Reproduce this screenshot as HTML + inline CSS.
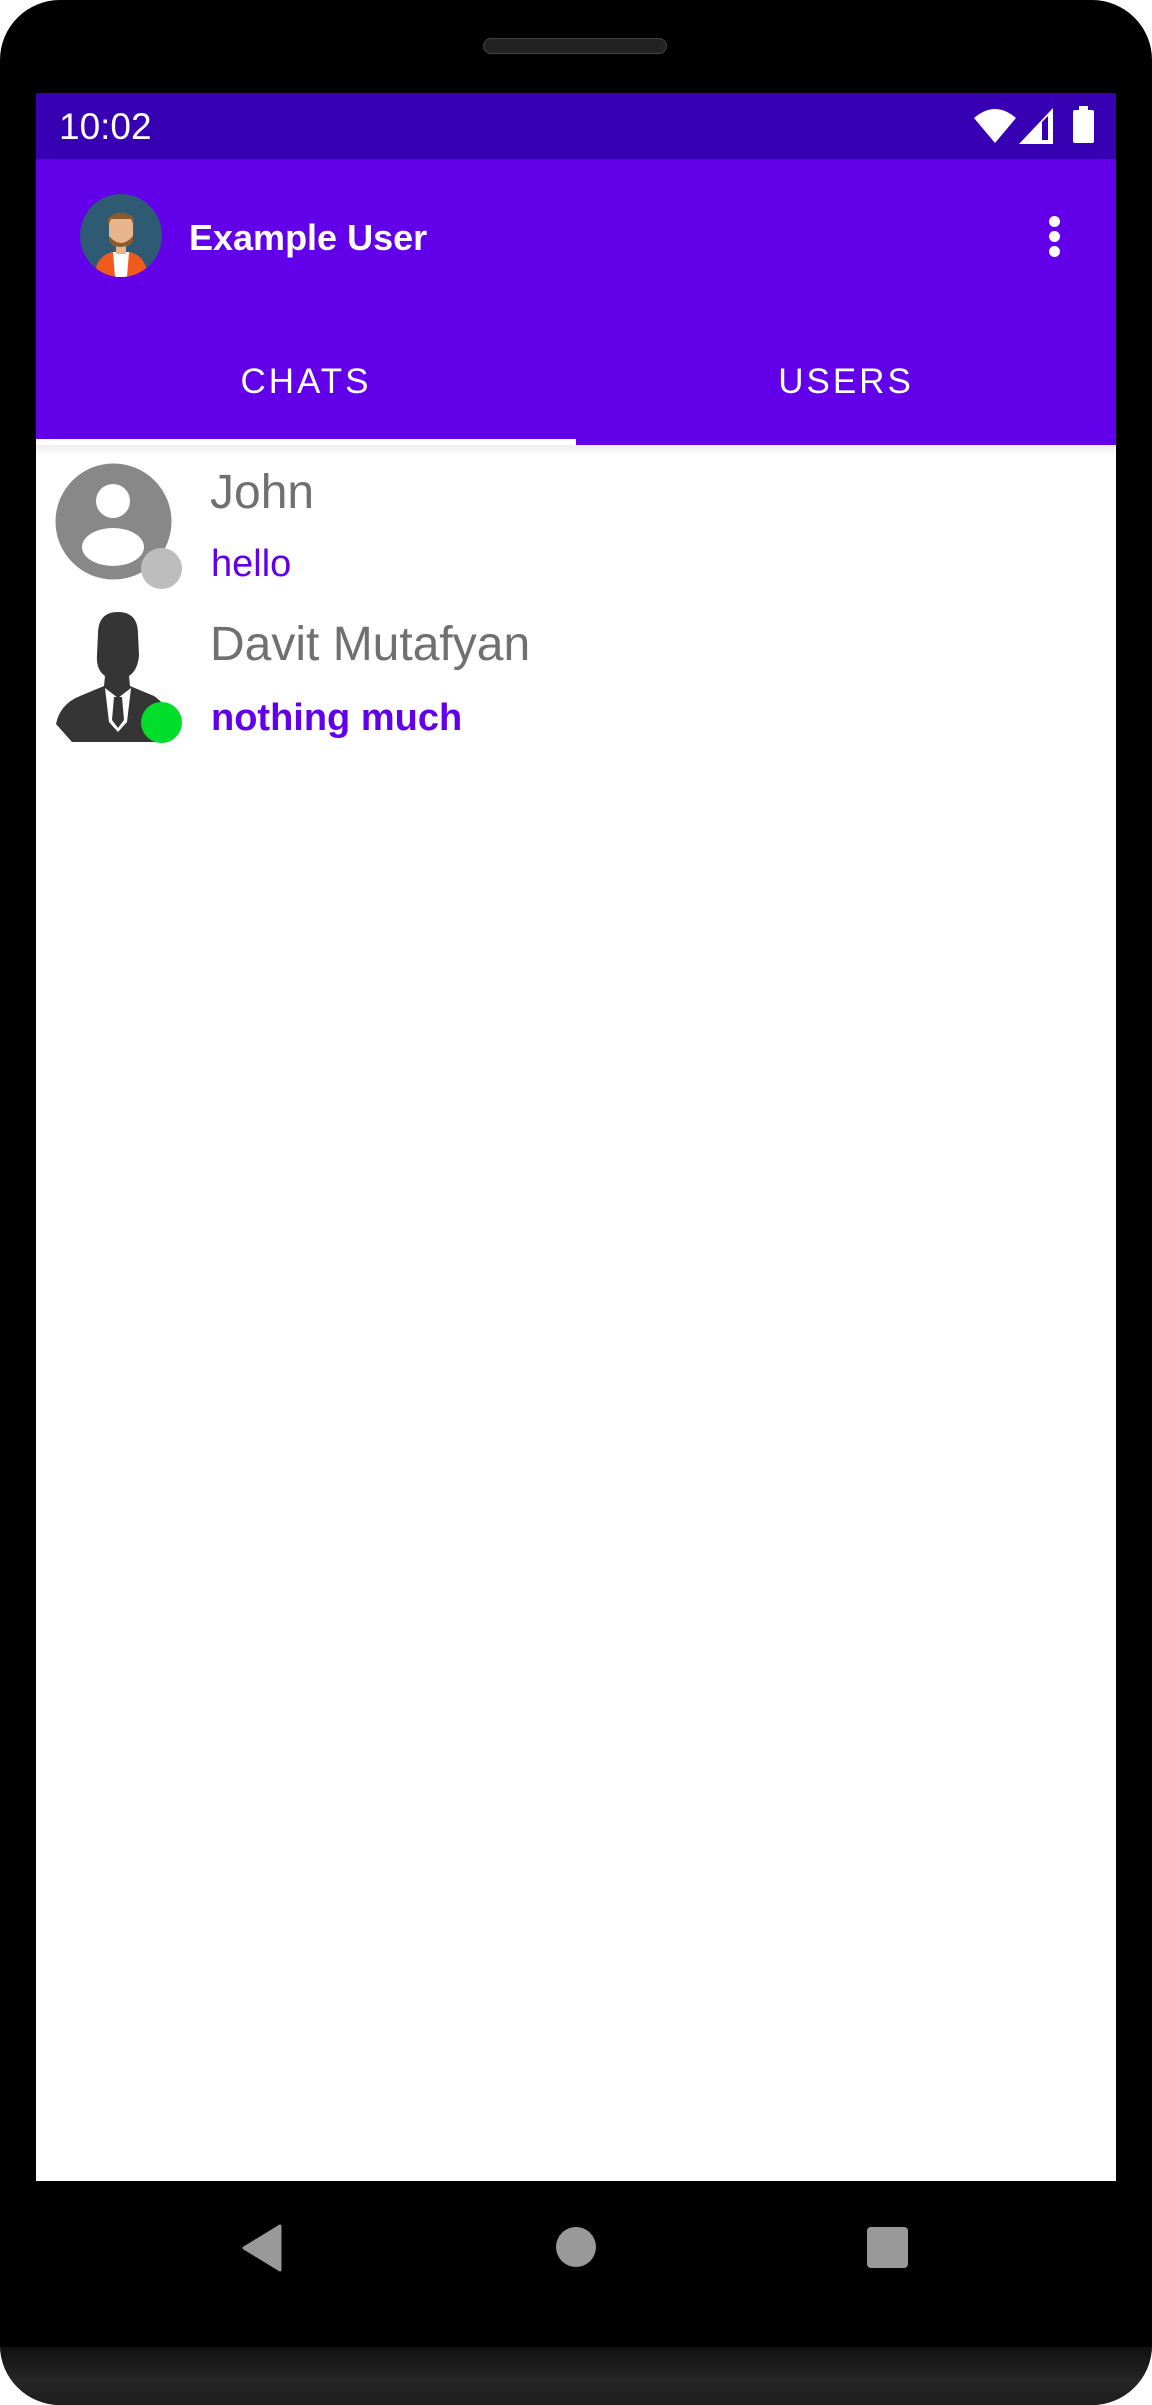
<!DOCTYPE html>
<html><head><meta charset="utf-8"><style>
html,body{margin:0;padding:0;background:#fff;}
body{width:1152px;height:2405px;position:relative;overflow:hidden;font-family:"Liberation Sans",sans-serif;}
.phone{position:absolute;left:0;top:0;width:1152px;height:2405px;background:#000;border-radius:60px;overflow:hidden;}
.bezel{position:absolute;left:0;top:2347px;width:1152px;height:58px;background:linear-gradient(#111,#262626 60%,#1d1d1d);}
.speaker{position:absolute;left:483px;top:38px;width:184px;height:16px;border-radius:8px;background:#222;border:1px solid #444;box-sizing:border-box;}
.screen{position:absolute;left:36px;top:93px;width:1080px;height:2088px;background:#fff;overflow:hidden;}
.status{position:absolute;left:0;top:0;width:1080px;height:66px;background:#3700b3;}
.bar{position:absolute;left:0;top:66px;width:1080px;height:286px;background:#6200ea;}
.t{position:absolute;color:#fff;white-space:nowrap;}
</style></head><body>
<div class="phone">
<div class="speaker"></div>
<div class="screen">
 <div class="status">
  <div class="t" style="left:23px;top:13px;font-size:37px;">10:02</div>
  <svg style="position:absolute;left:938px;top:15px" width="42" height="35" viewBox="0 0 42 35"><path d="M0 10 Q21 -8 42 10 L21 35 Z" fill="#fff"/></svg>
  <svg style="position:absolute;left:983px;top:15px" width="34" height="36" viewBox="0 0 34 36"><path d="M0 36 L34 0 L34 36 Z" fill="#fff"/><path d="M23 14 L23 32 L29 32 L29 8 Z" fill="#3700b3"/></svg>
  <div style="position:absolute;left:1037px;top:17px;width:21px;height:33px;background:#fff;border-radius:2px;"></div>
  <div style="position:absolute;left:1043px;top:13px;width:9px;height:5px;background:#fff;"></div>
 </div>
 <div class="bar">
  <svg style="position:absolute;left:44px;top:35px" width="82" height="83" viewBox="0 0 82 83">
   <defs><clipPath id="c"><ellipse cx="41" cy="41.5" rx="41" ry="41.5"/></clipPath></defs>
   <ellipse cx="41" cy="41.5" rx="41" ry="41.5" fill="#2f5a73"/>
   <g clip-path="url(#c)">
    <path d="M14 83 Q16 62 32 58 L50 58 Q66 62 68 83Z" fill="#f05a1a"/>
    <path d="M33 58 L49 58 L47 83 L35 83Z" fill="#fff"/>
    <rect x="36" y="48" width="10" height="12" fill="#e8b48c"/>
    <rect x="29" y="22" width="24" height="30" rx="8" fill="#e8b48c"/>
    <path d="M29 42 Q41 56 53 42 L53 48 Q41 58 29 48Z" fill="#8a5a2a"/>
    <path d="M28 32 L28 24 Q41 13 54 24 L54 32 L51 25 L31 25Z" fill="#8a5a2a"/>
   </g>
  </svg>
  <div class="t" style="left:153px;top:58px;font-size:36px;font-weight:bold;">Example User</div>
  <div style="position:absolute;left:1013px;top:57px;width:11px;height:11px;border-radius:50%;background:#fff;"></div>
  <div style="position:absolute;left:1013px;top:72px;width:11px;height:11px;border-radius:50%;background:#fff;"></div>
  <div style="position:absolute;left:1013px;top:87px;width:11px;height:11px;border-radius:50%;background:#fff;"></div>
  <div class="t" style="left:0;width:540px;text-align:center;top:203px;font-size:35px;letter-spacing:3px;">CHATS</div>
  <div class="t" style="left:540px;width:540px;text-align:center;top:203px;font-size:35px;letter-spacing:3px;">USERS</div>
  <div style="position:absolute;left:0;top:280px;width:540px;height:6px;background:#fff;"></div>
 </div>
 <div style="position:absolute;left:0;top:352px;width:1080px;height:12px;background:linear-gradient(rgba(0,0,0,0.07),rgba(0,0,0,0));"></div>
 <!-- John -->
 <svg style="position:absolute;left:19px;top:370px" width="117" height="117" viewBox="0 0 117 117">
  <ellipse cx="58.5" cy="58.5" rx="58" ry="58" fill="#888"/>
  <circle cx="58" cy="38" r="17" fill="#fff"/>
  <ellipse cx="58" cy="84" rx="31" ry="19" fill="#fff"/>
 </svg>
 <div style="position:absolute;left:105px;top:455px;width:41px;height:41px;border-radius:50%;background:#bdbdbd;"></div>
 <div class="t" style="left:174px;top:372px;font-size:48px;color:#707070;">John</div>
 <div class="t" style="left:175px;top:450px;font-size:38px;color:#6200ea;">hello</div>
 <!-- Davit -->
 <svg style="position:absolute;left:18px;top:519px" width="130" height="130" viewBox="0 0 130 130">
  <path d="M44 22 Q44 0 64 0 Q84 0 84 22 L85 43 Q84 58 75 64 L76 74 L100 84 Q112 92 118 108 L112 130 L18 130 L2 112 Q6 92 26 84 L50 74 L51 64 Q42 58 43 43Z" fill="#353535"/>
  <path d="M51 76 L64 86 L77 76 L73 110 L64 120 L55 110Z" fill="#fff"/>
  <path d="M60 85 L68 85 L70 108 L64 116 L58 108Z" fill="#353535"/>
 </svg>
 <div style="position:absolute;left:105px;top:609px;width:41px;height:41px;border-radius:50%;background:#00dd2a;"></div>
 <div class="t" style="left:174px;top:524px;font-size:48px;color:#707070;">Davit Mutafyan</div>
 <div class="t" style="left:175px;top:604px;font-size:38px;font-weight:bold;color:#6200ea;">nothing much</div>
</div>
<!-- nav -->
<svg style="position:absolute;left:240px;top:2224px" width="44" height="48" viewBox="0 0 44 48"><path d="M40 2 L40 46 L4 24Z" fill="#999" stroke="#999" stroke-width="3" stroke-linejoin="round"/></svg>
<div style="position:absolute;left:556px;top:2227px;width:40px;height:40px;border-radius:50%;background:#999;"></div>
<div style="position:absolute;left:867px;top:2227px;width:41px;height:41px;border-radius:4px;background:#999;"></div>
<div class="bezel"></div>
</div>
</body></html>
